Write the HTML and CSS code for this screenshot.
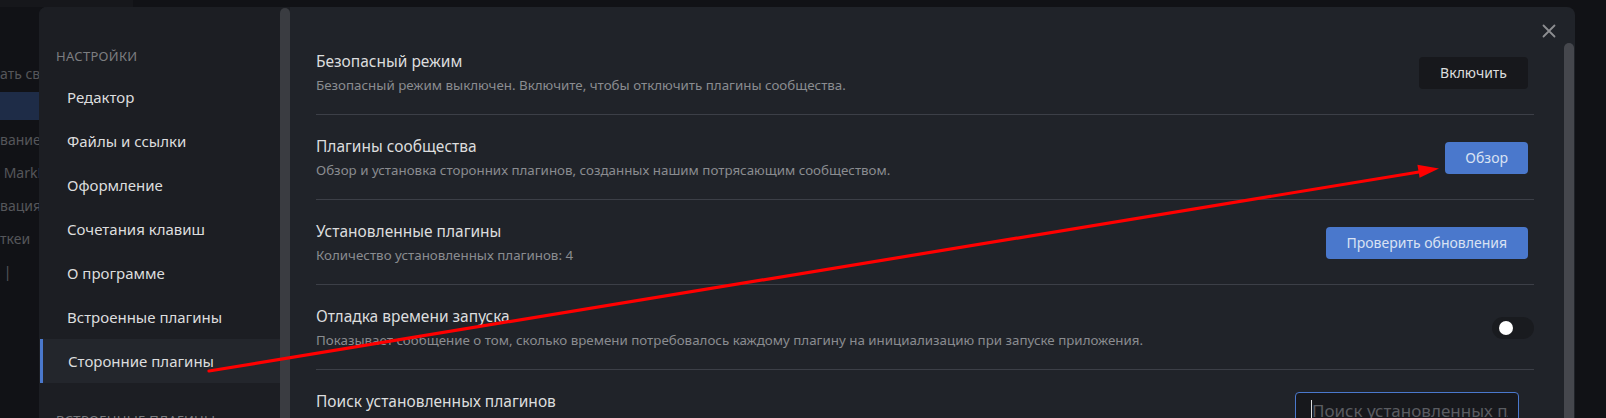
FILE: index.html
```html
<!DOCTYPE html>
<html lang="ru">
<head>
<meta charset="utf-8">
<title>Настройки — Сторонние плагины</title>
<link rel="stylesheet" href="styles.css">
</head>
<body>
<div class="app">
  <div class="bg-top"></div>
  <div class="bg-side">
    <div class="bg-item">ать свойства</div>
    <div class="bg-item bg-active"></div>
    <div class="bg-item">вание</div>
    <div class="bg-item">&nbsp;MarkDown</div>
    <div class="bg-item">вация с</div>
    <div class="bg-item">ткеи</div>
    <div class="bg-item">&nbsp;|</div>
  </div>
</div>

<div class="modal">
  <aside class="sidebar">
    <nav class="nav">
      <div class="nav-heading">Настройки</div>
      <div class="nav-item">Редактор</div>
      <div class="nav-item">Файлы и ссылки</div>
      <div class="nav-item">Оформление</div>
      <div class="nav-item">Сочетания клавиш</div>
      <div class="nav-item">О программе</div>
      <div class="nav-item">Встроенные плагины</div>
      <div class="nav-item is-active">Сторонние плагины</div>
      <div class="nav-heading nav-heading-2">Встроенные плагины</div>
    </nav>
    <div class="side-scroll"></div>
  </aside>

  <main class="content">
    <div class="rows">
      <div class="row">
        <div class="info">
          <div class="title">Безопасный режим</div>
          <div class="desc">Безопасный режим выключен. Включите, чтобы отключить плагины сообщества.</div>
        </div>
        <button class="btn btn-dark">Включить</button>
      </div>
      <div class="row">
        <div class="info">
          <div class="title">Плагины сообщества</div>
          <div class="desc">Обзор и установка сторонних плагинов, созданных нашим потрясающим сообществом.</div>
        </div>
        <button class="btn btn-blue btn-browse">Обзор</button>
      </div>
      <div class="row">
        <div class="info">
          <div class="title">Установленные плагины</div>
          <div class="desc">Количество установленных плагинов: 4</div>
        </div>
        <button class="btn btn-blue">Проверить обновления</button>
      </div>
      <div class="row">
        <div class="info">
          <div class="title">Отладка времени запуска</div>
          <div class="desc">Показывает сообщение о том, сколько времени потребовалось каждому плагину на инициализацию при запуске приложения.</div>
        </div>
        <div class="toggle"><span class="knob"></span></div>
      </div>
      <div class="row row-search">
        <div class="info">
          <div class="title">Поиск установленных плагинов</div>
        </div>
        <div class="search"><span class="caret"></span><span class="placeholder">Поиск установленных плагинов</span></div>
      </div>
    </div>
    <div class="main-scroll"></div>
    <div class="close">
      <svg width="14" height="14" viewBox="0 0 14 14"><path d="M1.5 1.5 L12.5 12.5 M12.5 1.5 L1.5 12.5" stroke="#8d8e91" stroke-width="1.8" stroke-linecap="round"/></svg>
    </div>
  </main>
</div>

<svg class="annot" width="1606" height="418" viewBox="0 0 1606 418">
  <line x1="209" y1="371" x2="1422" y2="171.5" stroke="#ff0000" stroke-width="3.2" stroke-linecap="round"/>
  <polygon points="1439,168.5 1419.6,177.8 1417.4,164.8" fill="#ff0000"/>
</svg>
</body>
</html>
```

FILE: styles.css
```css
* { box-sizing: border-box; }

html, body {
  margin: 0;
  padding: 0;
  width: 1606px;
  height: 418px;
  overflow: hidden;
  background: #111216;
  font-family: "Noto Sans", "Open Sans", "Liberation Sans", sans-serif;
}

.app {
  width: 1606px;
  height: 418px;
}

.bg-top {
  height: 7px;
  width: 133px;
  background: #16171b;
}

.bg-side {
  width: 60px;
  padding-top: 50px;
  overflow: hidden;
}

.bg-item {
  height: 33px;
  line-height: 33px;
  font-size: 14px;
  color: #55565a;
  white-space: nowrap;
}

.bg-active {
  height: 28px;
  margin: 2px 0 3px;
  background: #1e2c47;
}

.modal {
  position: absolute;
  left: 39px;
  top: 7px;
  width: 1536px;
  height: 440px;
  border-radius: 8px;
  overflow: hidden;
  display: flex;
  background: #202329;
}

.sidebar {
  width: 251px;
  display: flex;
  background: #1c1e23;
}

.nav {
  width: 241px;
  padding-top: 40px;
}

.nav-heading {
  height: 18px;
  line-height: 18px;
  padding-left: 17px;
  font-size: 13px;
  letter-spacing: 0.3px;
  text-transform: uppercase;
  color: #7c7d80;
  margin-bottom: 10px;
}

.nav-heading-2 {
  margin-top: 28px;
}

.nav-item {
  height: 44px;
  line-height: 44px;
  padding-left: 28px;
  font-size: 15px;
  color: #dcddde;
}

.nav-item.is-active {
  background: #23262c;
  border-left: 3px solid #4a78cc;
  padding-left: 25px;
  margin-left: 1px;
}

.side-scroll {
  width: 10px;
  margin-top: 1px;
  border-radius: 5px 5px 0 0;
  background: #3a3c41;
}

.content {
  flex: 1;
  display: flex;
  position: relative;
}

.rows {
  flex: 1;
  padding: 23px 30px 0 26px;
}

.row {
  display: flex;
  align-items: center;
  justify-content: space-between;
  padding: 21px 0 20px;
  border-bottom: 1px solid #3c3f47;
}

.info {
  display: flex;
  flex-direction: column;
  gap: 5px;
}

.title {
  font-size: 15.5px;
  line-height: 20px;
  color: #dcddde;
}

.desc {
  font-size: 13.35px;
  line-height: 18px;
  color: #8a8c90;
}

.btn {
  height: 32px;
  padding: 0 21px;
  margin-right: 6px;
  border: none;
  border-radius: 4px;
  font-family: inherit;
  font-size: 14px;
  color: #dcddde;
}

.btn-dark {
  background: #17181c;
}

.btn-blue {
  background: #4a78cc;
  color: #d9e2f3;
}

.btn-browse {
  padding: 0 20px;
}

.toggle {
  width: 42px;
  height: 22px;
  border-radius: 11px;
  background: #191b1f;
  display: flex;
  align-items: center;
  padding-left: 7px;
}

.knob {
  width: 14px;
  height: 14px;
  border-radius: 50%;
  background: #ffffff;
}

.row-search {
  align-items: flex-start;
  border-bottom: none;
  padding-top: 21px;
}

.search {
  margin-top: 1px;
  margin-right: 15px;
  width: 224px;
  height: 36px;
  border: 1px solid #4a78cc;
  border-radius: 4px;
  background: #17181c;
  display: flex;
  align-items: center;
  padding: 0 10px 0 15px;
  overflow: hidden;
  white-space: nowrap;
}

.caret {
  width: 1px;
  height: 20px;
  background: #dcddde;
  flex-shrink: 0;
}

.placeholder {
  font-size: 17px;
  color: #5a5c61;
  overflow: hidden;
}

.main-scroll {
  width: 10px;
  margin-top: 36px;
  margin-right: 1px;
  border-radius: 5px 5px 0 0;
  background: #45474d;
}

.close {
  position: absolute;
  right: 19px;
  top: 17px;
  width: 14px;
  height: 14px;
  display: flex;
}

.annot {
  position: absolute;
  left: 0;
  top: 0;
  pointer-events: none;
}
```
